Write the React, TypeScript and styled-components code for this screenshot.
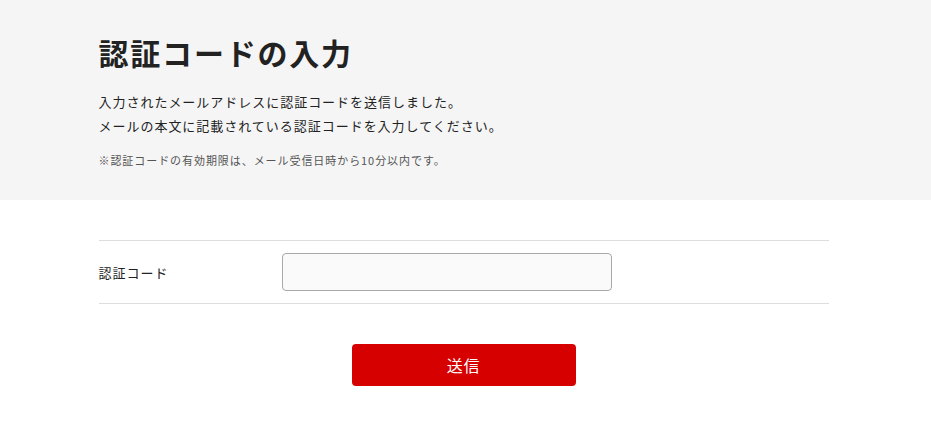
import React, { useState } from 'react';
import styled, { createGlobalStyle } from 'styled-components';

const colors = {
  text: '#222222',
  subText: '#555555',
  band: '#f5f5f5',
  line: '#dddddd',
  inputBorder: '#a9a9a9',
  inputBg: '#fafafa',
  red: '#d70000',
};

const GlobalStyle = createGlobalStyle`
  html, body {
    margin: 0;
    padding: 0;
    background: #ffffff;
    font-family: "Noto Sans CJK JP", "Noto Sans", sans-serif;
    color: ${colors.text};
  }
  * {
    box-sizing: border-box;
  }
`;

// the page is centred a little left of the window, as if a scrollbar gutter were kept
const Page = styled.div`
  min-height: 100vh;
`;

const Band = styled.section`
  background-color: ${colors.band};
  padding: 30px 4px 31px 0;
`;

const Container = styled.div`
  width: 730px;
  margin: 0 auto;
`;

const Title = styled.h1`
  margin: 0;
  font-size: 30px;
  line-height: 45px;
  font-weight: 700;
  letter-spacing: 0.06em;
  color: ${colors.text};
`;

const Lead = styled.p`
  margin: 15px 0 0 0;
  font-size: 13px;
  line-height: 24px;
  letter-spacing: 0.075em;
`;

const Note = styled.p`
  margin: 13px 0 0 0;
  font-size: 11px;
  line-height: 18px;
  letter-spacing: 0.085em;
  color: ${colors.subText};
`;

const FormSection = styled.section`
  padding: 40px 4px 0 0;
`;

const FieldRow = styled.div`
  display: flex;
  align-items: center;
  padding: 12px 0;
  border-top: 1px solid ${colors.line};
  border-bottom: 1px solid ${colors.line};
`;

const Label = styled.label`
  width: 183px;
  font-size: 13px;
  letter-spacing: 0.075em;
`;

const CodeInput = styled.input`
  width: 330px;
  height: 38px;
  padding: 0 10px;
  border: 1px solid ${colors.inputBorder};
  border-radius: 4px;
  background-color: ${colors.inputBg};
  font-size: 14px;
  font-family: inherit;
  outline: none;
`;

const ButtonRow = styled.div`
  display: flex;
  justify-content: center;
  margin-top: 40px;
`;

const SubmitButton = styled.button`
  width: 224px;
  height: 42px;
  border: none;
  border-radius: 4px;
  background-color: ${colors.red};
  color: #ffffff;
  font-family: inherit;
  font-size: 16px;
  letter-spacing: 0.05em;
  cursor: pointer;
`;

const App = () => {
  const [code, setCode] = useState('');

  return (
    <Page>
      <GlobalStyle />
      <Band>
        <Container>
          <Title>認証コードの入力</Title>
          <Lead>
            入力されたメールアドレスに認証コードを送信しました。
            <br />
            メールの本文に記載されている認証コードを入力してください。
          </Lead>
          <Note>※認証コードの有効期限は、メール受信日時から10分以内です。</Note>
        </Container>
      </Band>
      <FormSection>
        <Container>
          <FieldRow>
            <Label htmlFor="auth-code">認証コード</Label>
            <CodeInput id="auth-code" type="text" value={code} onChange={(e) => setCode(e.target.value)} />
          </FieldRow>
          <ButtonRow>
            <SubmitButton type="button">送信</SubmitButton>
          </ButtonRow>
        </Container>
      </FormSection>
    </Page>
  );
};

export default App;
